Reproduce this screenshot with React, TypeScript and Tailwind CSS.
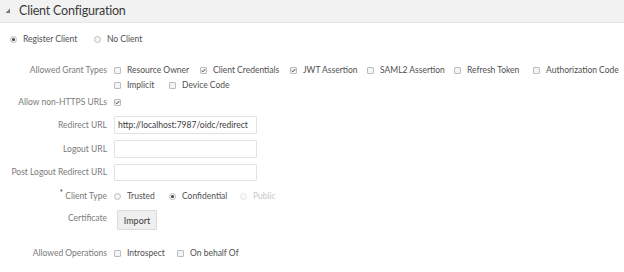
import { FC, ReactNode } from "react";

const Check: FC<{ checked?: boolean }> = ({ checked }) => (
    <span className="inline-flex w-[7px] h-[7px] border border-[#bdbdbd] bg-[#f4f4f4] rounded-[1px] items-center justify-center shrink-0">
        {checked && (
            <svg width="7" height="7" viewBox="0 0 7 7">
                <path d="M1 3.6 L2.8 5.3 L6 1.4" stroke="#444" strokeWidth="1.3" fill="none" />
            </svg>
        )}
    </span>
);

const Radio: FC<{ checked?: boolean; disabled?: boolean }> = ({ checked, disabled }) => (
    <span className={`inline-flex w-[7px] h-[7px] rounded-full border items-center justify-center shrink-0 ${disabled ? "border-[#e2e2e2] bg-[#fafafa]" : "border-[#bdbdbd] bg-[#f4f4f4]"}`}>
        {checked && <span className="w-[3px] h-[3px] rounded-full bg-[#444]" />}
    </span>
);

const Opt: FC<{ control: ReactNode; label: string; muted?: boolean; w: string }> = ({ control, label, muted, w }) => (
    <div className={`flex items-center ${w}`}>
        {control}
        <span className={`ml-[6px] ${muted ? "text-[#c8c8c8]" : "text-[#505050]"}`}>{label}</span>
    </div>
);

const Row: FC<{ label: ReactNode; children?: ReactNode; className?: string }> = ({ label, children, className }) => (
    <div className={`flex items-center ${className ?? ""}`}>
        <div className="w-[110px] text-right pr-[3px] text-[#7a7a7a] shrink-0">{label}</div>
        <div className="flex items-center">{children}</div>
    </div>
);

export default function App() {
    return (
        <div className="w-[624px] h-[272px] bg-white overflow-hidden text-[8.5px] leading-none" style={{ fontFamily: "Lato, 'Open Sans', sans-serif" }}>
            <div className="h-[23px] bg-[#f2f2f2] border-b border-[#e6e6e6] flex items-center">
                <svg width="6" height="6" viewBox="0 0 6 6" className="ml-[5px]">
                    <path d="M5 0.5 L5 5 L0.5 5 Z" fill="#777" />
                </svg>
                <span className="ml-[8px] text-[12.5px] tracking-[-0.2px] text-[#3a3a3a]">Client Configuration</span>
            </div>

            <div className="flex items-center pl-[10px] mt-[12px] h-[8px]">
                <Opt w="w-[84px]" control={<Radio checked />} label="Register Client" />
                <Opt w="" control={<Radio />} label="No Client" />
            </div>

            <Row label="Allowed Grant Types" className="mt-[22px] h-[10px]">
                <div className="pl-[4px] flex items-center">
                    <Opt w="w-[86px]" control={<Check />} label="Resource Owner" />
                    <Opt w="w-[90px]" control={<Check checked />} label="Client Credentials" />
                    <Opt w="w-[77px]" control={<Check checked />} label="JWT Assertion" />
                    <Opt w="w-[87px]" control={<Check />} label="SAML2 Assertion" />
                    <Opt w="w-[79px]" control={<Check />} label="Refresh Token" />
                    <Opt w="" control={<Check />} label="Authorization Code" />
                </div>
            </Row>
            <Row label="" className="mt-[5px] h-[10px]">
                <div className="pl-[4px] flex items-center">
                    <Opt w="w-[55px]" control={<Check />} label="Implicit" />
                    <Opt w="" control={<Check />} label="Device Code" />
                </div>
            </Row>
            <Row label="Allow non-HTTPS URLs" className="mt-[7px] h-[10px]">
                <div className="pl-[4px] flex"><Check checked /></div>
            </Row>

            <Row label="Redirect URL" className="mt-[9px] h-[18px]">
                <div className="ml-[4px] w-[143px] h-[18px] border border-[#e2e2e2] rounded-[1px] flex items-center px-[3px] text-[#404040]">
                    http://localhost:7987/oidc/redirect
                </div>
            </Row>
            <Row label="Logout URL" className="mt-[6px] h-[18px]">
                <div className="ml-[4px] w-[143px] h-[18px] border border-[#e2e2e2] rounded-[1px]" />
            </Row>
            <Row label="Post Logout Redirect URL" className="mt-[6px] h-[17px]">
                <div className="ml-[4px] w-[143px] h-[17px] border border-[#e2e2e2] rounded-[1px]" />
            </Row>

            <Row label={<span><span className="relative -top-[3px] mr-[2px] text-[#555]">*</span>Client Type</span>} className="mt-[10px] h-[10px]">
                <div className="pl-[4px] flex items-center">
                    <Opt w="w-[55px]" control={<Radio />} label="Trusted" />
                    <Opt w="w-[71px]" control={<Radio checked />} label="Confidential" />
                    <Opt w="" control={<Radio disabled />} label="Public" muted />
                </div>
            </Row>
            <Row label={<span className="relative -top-[2px]">Certificate</span>} className="mt-[9px] h-[20px]">
                <div className="ml-[7px] w-[40px] h-[20px] bg-[#efefef] border border-[#dcdcdc] rounded-[1px] flex items-center justify-center text-[#404040] text-[9px]">
                    Import
                </div>
            </Row>

            <Row label="Allowed Operations" className="mt-[18px] h-[10px]">
                <div className="pl-[4px] flex items-center">
                    <Opt w="w-[63px]" control={<Check />} label="Introspect" />
                    <Opt w="" control={<Check />} label="On behalf Of" />
                </div>
            </Row>
        </div>
    );
}
